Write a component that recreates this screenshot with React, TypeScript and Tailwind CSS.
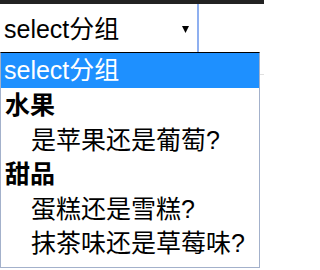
import React from "react";

const font = { fontFamily: "'Liberation Sans', 'Noto Sans CJK SC', sans-serif" };

export default function App() {
  return (
    <div className="relative w-[264px] h-[270px] bg-white overflow-hidden" style={font}>
      <div className="h-[4px] w-full bg-[#222222]" />
      <div className="flex h-[48px]">
        <div className="flex w-[199px] items-center justify-between border-r-2 border-[#8fb0f0] pl-[4px] pr-[8px] pt-[2px]">
          <span className="text-[25px] leading-none text-black">select分组</span>
          <svg width="7" height="7" viewBox="0 0 7 7" className="mt-[1px]">
            <polygon points="0,0 7,0 3.5,7" fill="#000" />
          </svg>
        </div>
        <div className="flex-1" />
      </div>
      <div className="mt-[22px] border-t border-[#e0e0e0]" />

      <div className="absolute left-0 top-[52px] w-[260px] border-t border-black border-x border-b border-x-[#a3b1cb] border-b-[#a3b1cb] bg-white pb-[7px] text-[25px] text-black">
        <div className="flex h-[34.5px] items-center bg-[#1e90ff] pl-[3px] text-white">select分组</div>
        <div className="flex h-[34.5px] items-center pl-[4px] pt-[2px] font-bold">水果</div>
        <div className="flex h-[34.5px] items-center pl-[30px] pt-[2px]">是苹果还是葡萄?</div>
        <div className="flex h-[34.5px] items-center pl-[4px] pt-[2px] font-bold">甜品</div>
        <div className="flex h-[34.5px] items-center pl-[30px] pt-[2px]">蛋糕还是雪糕?</div>
        <div className="flex h-[34.5px] items-center pl-[30px] pt-[2px]">抹茶味还是草莓味?</div>
      </div>
    </div>
  );
}
